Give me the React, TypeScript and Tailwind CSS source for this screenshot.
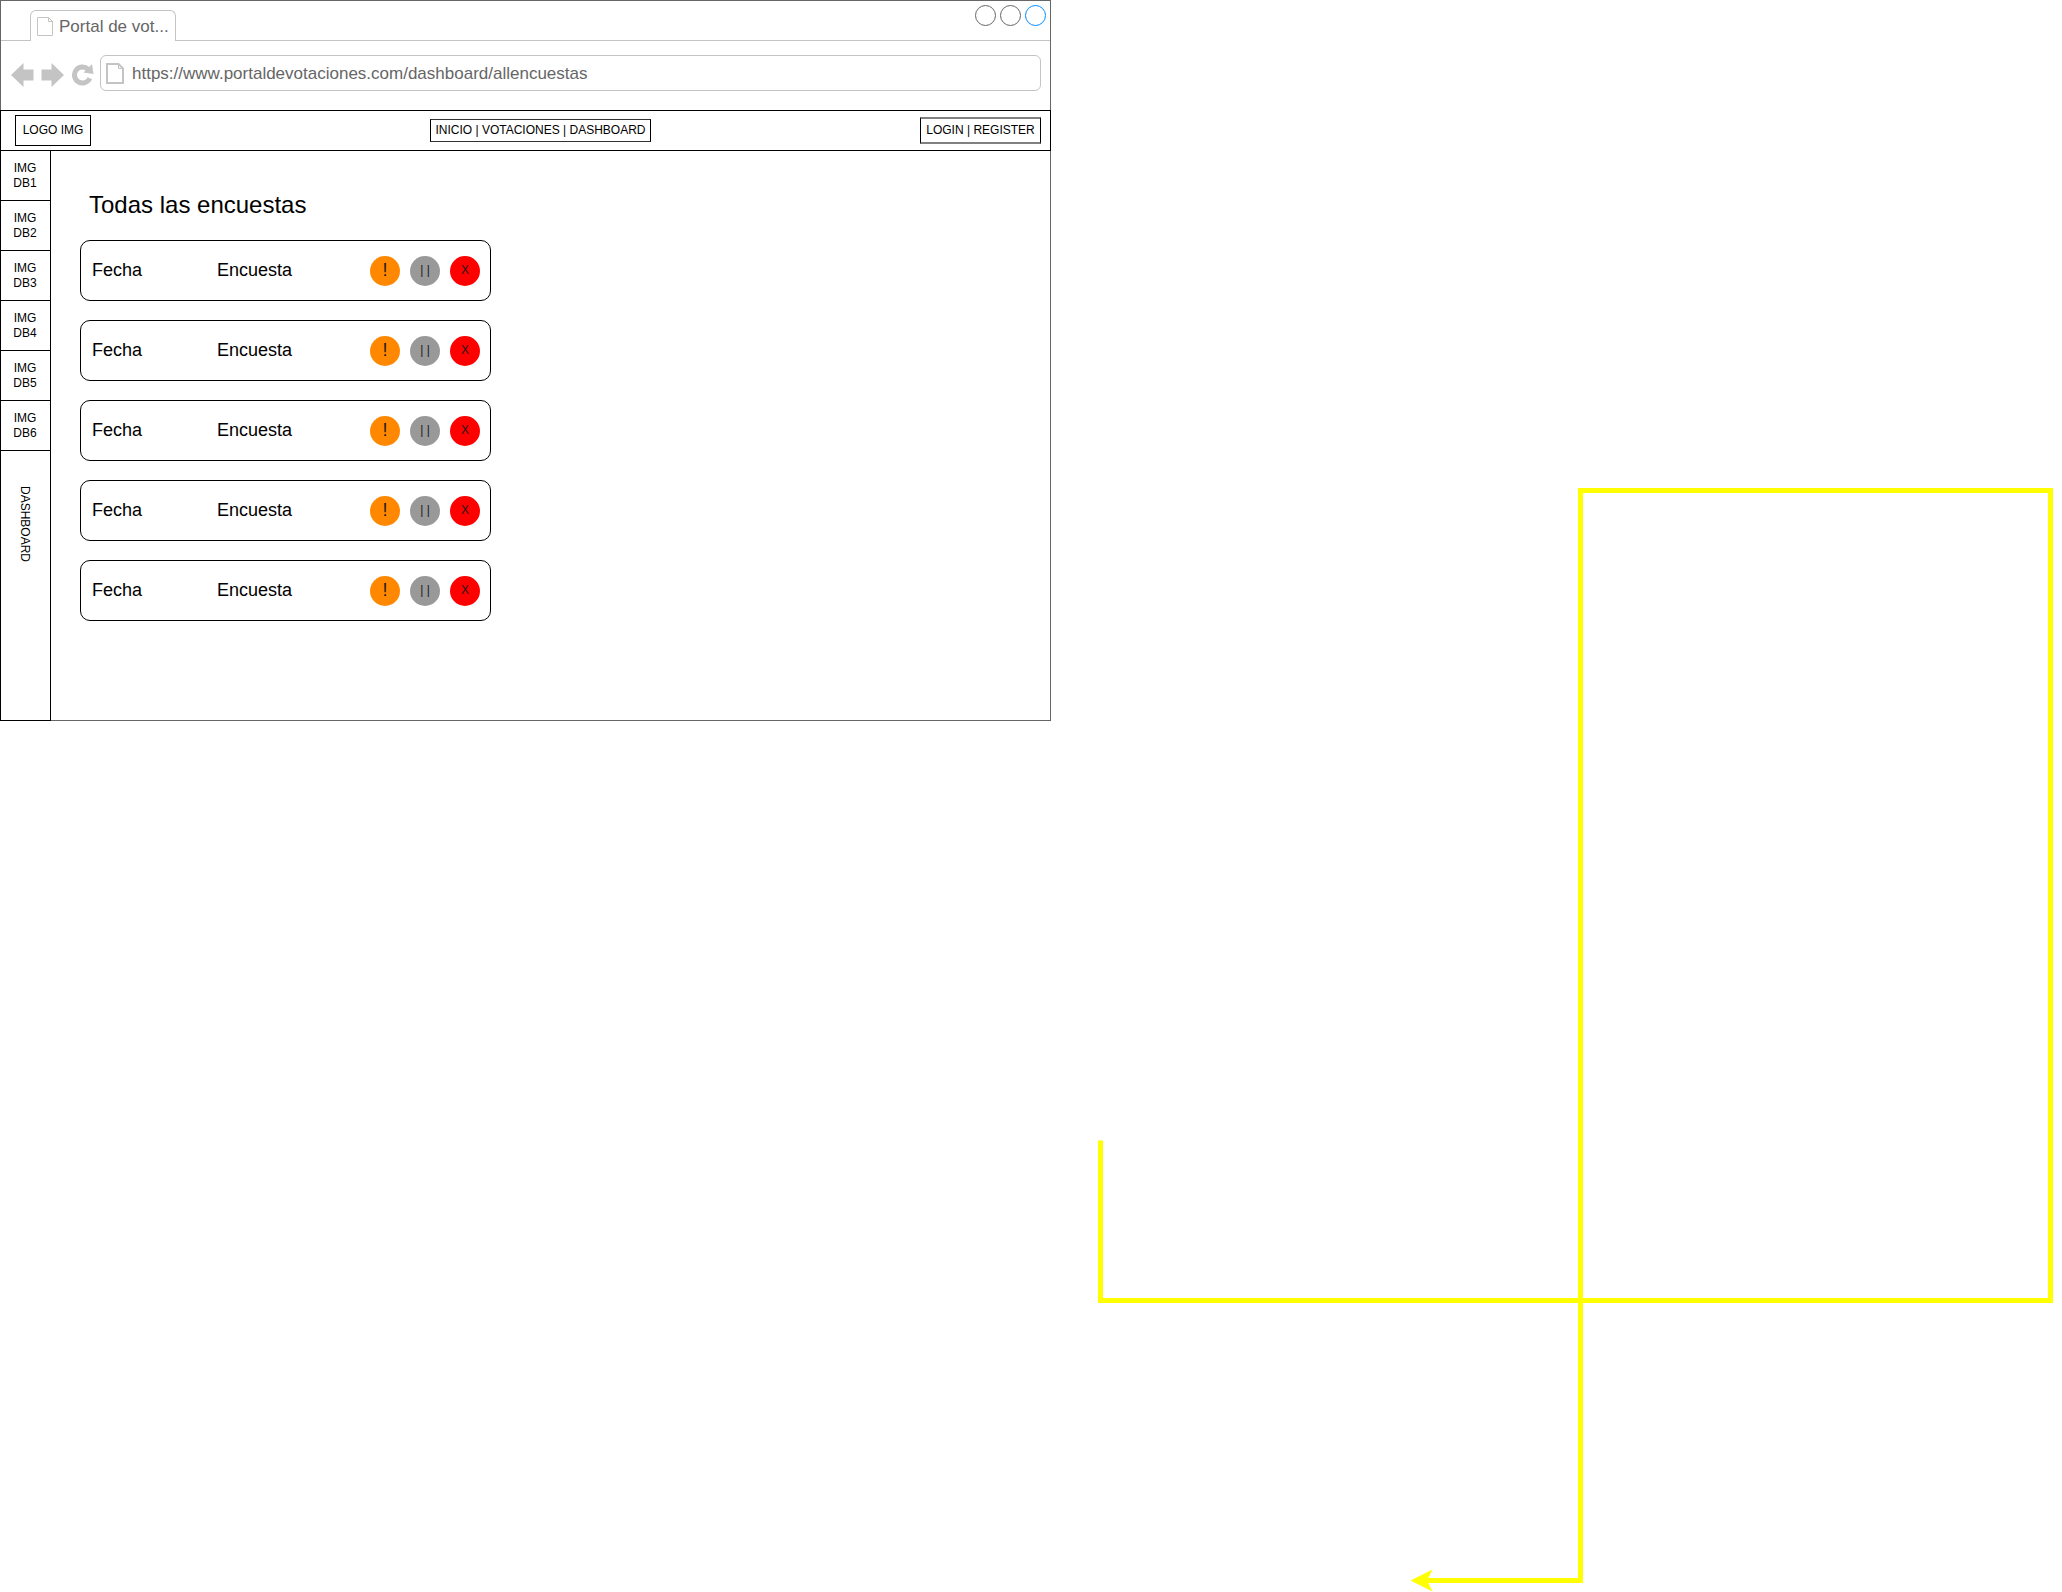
import React from "react";

const dashboards = ["DB1", "DB2", "DB3", "DB4", "DB5", "DB6"];
const surveys = [1, 2, 3, 4, 5];

function TabStrip() {
  return (
    <div className="flex h-10 items-end">
      <div className="h-full w-[29px] shrink-0 border-b border-[#c4c4c4]" />
      <div className="flex h-[31px] w-[146px] shrink-0 items-center rounded-t-md border border-b-0 border-[#c4c4c4] pl-1.5 text-[17px] text-[#666666]">
        <svg className="mt-px h-[19px] w-4 shrink-0" viewBox="0 0 16 19" fill="none" stroke="#c4c4c4" aria-hidden="true">
          <path d="M.5 .5H11.5L15.5 4.5V18.5H.5Z" />
          <path d="M11.5 .5V4.5H15.5" />
        </svg>
        <span className="ml-1.5 truncate pt-0.5">Portal de vot...</span>
      </div>
      <div className="flex h-full grow items-start justify-end gap-1 border-b border-[#c4c4c4] pr-1 pt-1">
        <button aria-label="Minimizar" className="size-[21px] rounded-full border border-[#666666]" />
        <button aria-label="Maximizar" className="size-[21px] rounded-full border border-[#666666]" />
        <button aria-label="Cerrar" className="size-[21px] rounded-full border border-[#008cff]" />
      </div>
    </div>
  );
}

function AddressBar() {
  return (
    <div className="flex h-[69px] items-start pl-2.5 pr-[9px] pt-3.5">
      <div className="flex h-9 shrink-0 items-center text-[#c4c4c4]">
        <button aria-label="Atrás" className="mt-1">
          <svg className="h-6 w-[23px]" viewBox="0 0 23 24" fill="currentColor" aria-hidden="true">
            <path d="M0 12L12.5 0V6.5H22.5V17.5H12.5V24Z" />
          </svg>
        </button>
        <button aria-label="Adelante" className="ml-[7px] mt-1">
          <svg className="h-6 w-[23px]" viewBox="0 0 23 24" fill="currentColor" aria-hidden="true">
            <path d="M23 12L10.5 0V6.5H.5V17.5H10.5V24Z" />
          </svg>
        </button>
        <button aria-label="Recargar" className="ml-2 mt-1">
          <svg className="h-[22px] w-[22px]" viewBox="0 0 22 22" aria-hidden="true">
            <path d="M16.2 5.4A8 8 0 1 0 17.8 14.3" fill="none" stroke="currentColor" strokeWidth="5" />
            <path d="M20 0L21.5 10L11.5 8.5Z" fill="currentColor" />
          </svg>
        </button>
      </div>
      <div className="ml-1.5 flex h-9 grow items-center rounded-md border border-[#c4c4c4] pl-[5px]">
        <svg className="mt-px h-[21px] w-[18px] shrink-0" viewBox="0 0 18 21" fill="none" stroke="#c4c4c4" aria-hidden="true">
          <path d="M1 1H12.5L17 5.5V20H1Z" strokeWidth="2" />
          <path d="M12.5 1V5.5H17" />
        </svg>
        <input
          aria-label="Dirección"
          defaultValue="https://www.portaldevotaciones.com/dashboard/allencuestas"
          className="ml-2 min-w-0 grow bg-transparent pt-0.5 text-[17px] leading-6 text-[#666666] outline-none"
        />
      </div>
    </div>
  );
}

function SiteHeader() {
  return (
    <header className="-mx-px flex h-[41px] items-center justify-between border border-black pl-3.5 pr-[9px] text-xs">
      <a href="#" className="flex h-[31px] w-[76px] items-center justify-center border border-black pb-0.5">
        LOGO IMG
      </a>
      <nav className="ml-[70px] flex h-[23px] w-[221px] items-center justify-center whitespace-pre border border-x-black border-y-[#333333] pb-0.5">
        <a href="#">INICIO</a> | <a href="#">VOTACIONES</a> | <a href="#">DASHBOARD</a>
      </nav>
      <div className="flex h-[27px] w-[121px] items-center justify-center whitespace-pre border border-y-2 border-x-black border-y-[#808080] pb-0.5">
        <a href="#">LOGIN</a> | <a href="#">REGISTER</a>
      </div>
    </header>
  );
}

function Sidebar() {
  return (
    <aside className="-mb-px -ml-px w-[51px] shrink-0 border border-t-0 border-black text-xs leading-[15px]">
      {dashboards.map((name) => (
        <a key={name} href="#" className="flex h-[50px] flex-col items-center justify-center border-b border-black pr-px">
          <span>IMG</span>
          <span>{name}</span>
        </a>
      ))}
      <div className="flex justify-center pr-0.5 pt-[35px]">
        <span className="[writing-mode:vertical-rl]">DASHBOARD</span>
      </div>
    </aside>
  );
}

function SurveyRow() {
  return (
    <li className="flex h-[61px] items-center rounded-[10px] border border-black pl-[11px] pr-2.5 text-lg">
      <span className="w-[125px] pb-0.5">Fecha</span>
      <span className="grow pb-0.5">Encuesta</span>
      <div className="flex gap-2.5">
        <button
          aria-label="Avisar"
          className="flex size-[30px] items-center justify-center rounded-full bg-[#ff8800] pb-px text-[#1a1a1a]"
        >
          !
        </button>
        <button
          aria-label="Pausar"
          className="flex size-[30px] items-center justify-center rounded-full bg-[#999999] pb-px text-xs text-[#1a1a1a]"
        >
          | |
        </button>
        <button
          aria-label="Eliminar"
          className="flex size-[30px] items-center justify-center rounded-full bg-[#ff0000] pb-px text-xs text-[#1a1a1a]"
        >
          X
        </button>
      </div>
    </li>
  );
}

function Connector() {
  return (
    <svg
      className="pointer-events-none absolute left-[1098px] top-[488px] h-[1104px] w-[955px]"
      viewBox="1098 488 955 1104"
      aria-hidden="true"
    >
      <path
        d="M1100.5 1140.5V1300.5H2050.5V490.5H1580.5V1580.5H1426"
        fill="none"
        stroke="#ffff00"
        strokeWidth="5"
      />
      <path d="M1410.5 1580.5L1432.5 1569.5L1427 1580.5L1432.5 1591.5Z" fill="#ffff00" />
    </svg>
  );
}

export default function App() {
  return (
    <div className="relative min-h-screen overflow-hidden bg-white font-['Liberation_Sans',Arial,sans-serif] text-black">
      <div className="w-full max-w-[1051px] border border-[#666666]">
        <TabStrip />
        <AddressBar />
        <SiteHeader />
        <div className="flex">
          <Sidebar />
          <main className="grow pb-[99px] pl-[29px] pt-9">
            <h1 className="ml-[9px] text-2xl leading-9">Todas las encuestas</h1>
            <ul className="mt-[17px] flex w-full max-w-[411px] flex-col gap-[19px]">
              {surveys.map((id) => (
                <SurveyRow key={id} />
              ))}
            </ul>
          </main>
        </div>
      </div>
      <Connector />
    </div>
  );
}
